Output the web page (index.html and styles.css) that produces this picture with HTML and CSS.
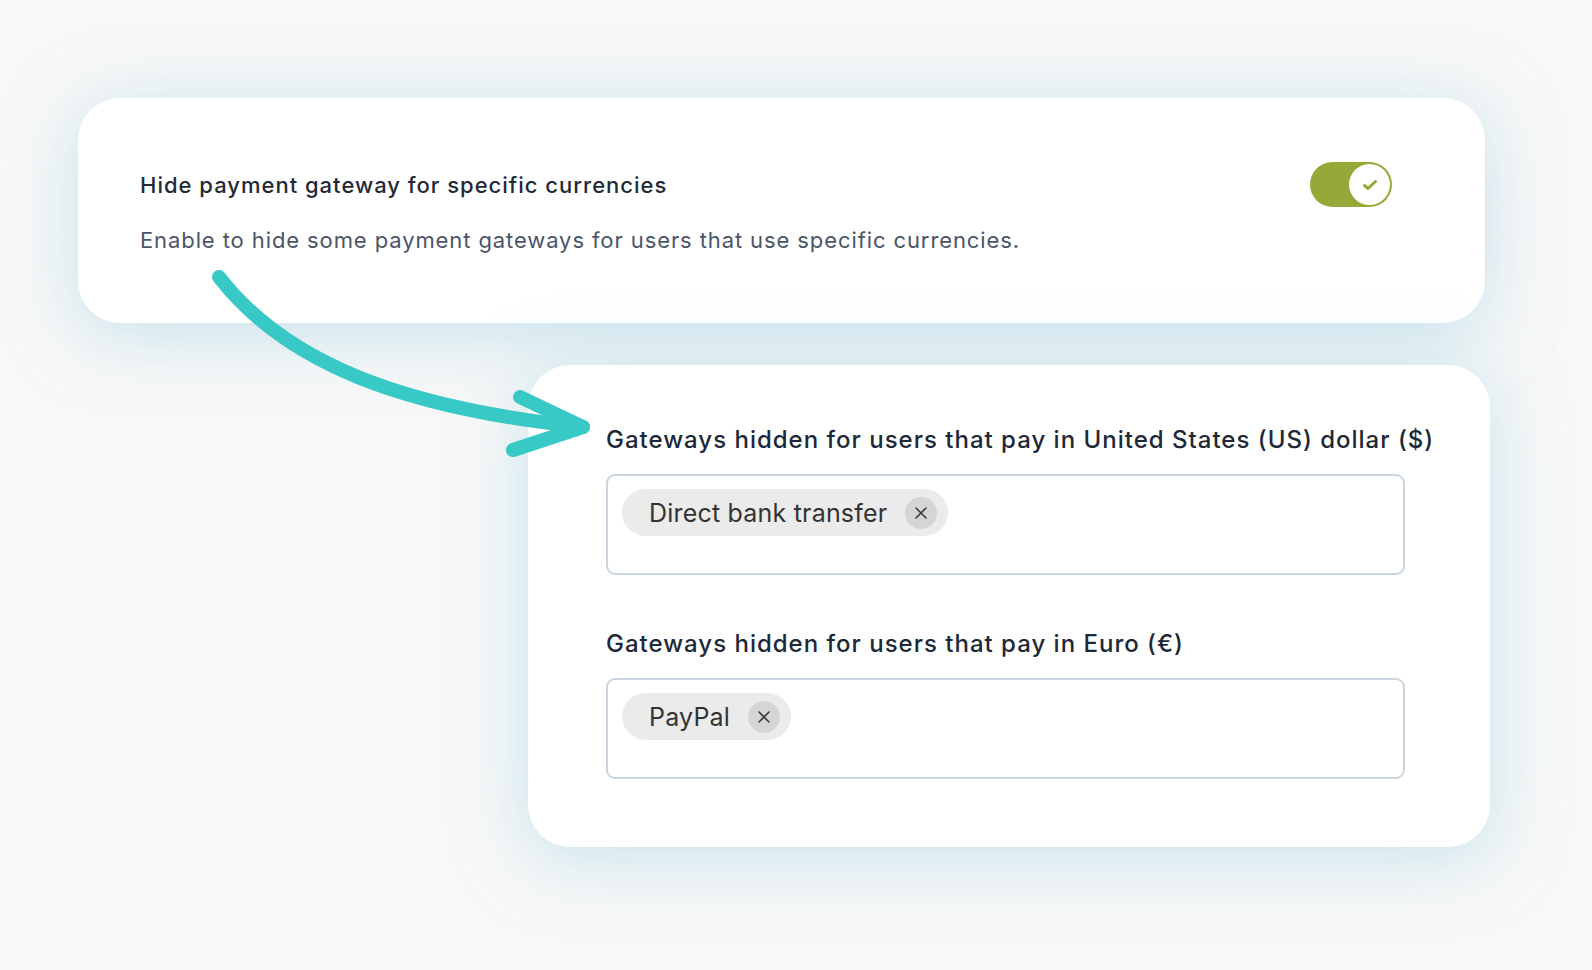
FILE: index.html
```html
<!DOCTYPE html>
<html lang="en">
<head>
<meta charset="UTF-8">
<meta name="viewport" content="width=device-width, initial-scale=1.0">
<title>Currency gateways</title>
<link rel="stylesheet" href="styles.css">
</head>
<body>
<div class="page">
    <div class="card setting-card">
        <div class="setting-text">
            <h3 class="setting-title">Hide payment gateway for specific currencies</h3>
            <p class="setting-desc">Enable to hide some payment gateways for users that use specific currencies.</p>
        </div>
        <div class="toggle">
            <span class="toggle-knob">
                <svg width="18" height="14" viewBox="0 0 18 14"><path d="M3.5 7.5 L7 10.5 L14.5 3.5" fill="none" stroke="#95a838" stroke-width="3" stroke-linecap="round" stroke-linejoin="round"/></svg>
            </span>
        </div>
    </div>

    <div class="card fields-card">
        <div class="field">
            <label class="field-label">Gateways hidden for users that pay in United States (US) dollar ($)</label>
            <div class="select-box">
                <span class="chip">Direct bank transfer
                    <span class="chip-close"><svg width="14" height="14" viewBox="0 0 14 14"><path d="M2 2 L12 12 M12 2 L2 12" stroke="#3a3a3a" stroke-width="1.6" stroke-linecap="round"/></svg></span>
                </span>
            </div>
        </div>
        <div class="field">
            <label class="field-label">Gateways hidden for users that pay in Euro (&euro;)</label>
            <div class="select-box">
                <span class="chip">PayPal
                    <span class="chip-close"><svg width="14" height="14" viewBox="0 0 14 14"><path d="M2 2 L12 12 M12 2 L2 12" stroke="#3a3a3a" stroke-width="1.6" stroke-linecap="round"/></svg></span>
                </span>
            </div>
        </div>
    </div>
</div>

<!-- hand drawn arrow over both cards -->
<svg class="arrow" width="1592" height="970" viewBox="0 0 1592 970">
    <path d="M219 277 C285 362, 400 408, 583 427" fill="none" stroke="#38c8c5" stroke-width="14" stroke-linecap="round"/>
    <path d="M520 397 L583 427 L513 450" fill="none" stroke="#38c8c5" stroke-width="14" stroke-linecap="round" stroke-linejoin="round"/>
</svg>
</body>
</html>
```

FILE: styles.css
```css
/* Basic styling */
body {
    font-family: Inter, "Noto Sans", sans-serif;
    margin: 0;
    padding: 0;
    background-color: #f8f8f8;
    position: relative;
    height: 970px;
    overflow: hidden;
}
.page {
    display: flex;
    flex-direction: column;
    align-items: flex-start;
    gap: 42px;
    padding-top: 98px;
}
.card {
    background-color: #fff;
    border-radius: 42px;
    box-shadow: 0 10px 70px rgba(145, 205, 225, 0.5);
    box-sizing: border-box;
}
.setting-card {
    margin-left: 78px;
    width: 1407px;
    height: 225px;
    padding: 72px 93px 0 62px;
    display: flex;
    align-items: flex-start;
    justify-content: space-between;
}
.setting-title {
    margin: 0 0 25px;
    font-size: 22px;
    font-weight: 500;
    letter-spacing: 1px;
    color: #1f2937;
    line-height: 30px;
}
.setting-desc {
    margin: 0;
    font-size: 22px;
    letter-spacing: 0.9px;
    color: #4b5568;
    line-height: 30px;
}
.toggle {
    width: 82px;
    height: 45px;
    border-radius: 23px;
    background-color: #96a838;
    display: flex;
    justify-content: flex-end;
    align-items: center;
    padding: 2px;
    box-sizing: border-box;
    margin-top: -8px;
}
.toggle-knob {
    width: 41px;
    height: 41px;
    border-radius: 50%;
    background-color: #fff;
    display: flex;
    align-items: center;
    justify-content: center;
}
.fields-card {
    margin-left: 528px;
    width: 962px;
    height: 482px;
    padding: 59px 85px 0 78px;
    display: flex;
    flex-direction: column;
    gap: 53px;
}
.field-label {
    display: block;
    font-size: 24px;
    font-weight: 500;
    letter-spacing: 1px;
    color: #1d2838;
    line-height: 32px;
    white-space: nowrap;
    margin-bottom: 18px;
}
.select-box {
    width: 799px;
    height: 101px;
    border: 2px solid #cbd5e1;
    border-radius: 9px;
    box-sizing: border-box;
    padding: 13px 14px;
}
.chip {
    display: inline-flex;
    align-items: center;
    height: 47px;
    padding: 0 11px 0 27px;
    gap: 18px;
    border-radius: 24px;
    background-color: #ebebeb;
    font-size: 25px;
    letter-spacing: 0.2px;
    color: #333;
}
.chip-close {
    width: 32px;
    height: 32px;
    border-radius: 50%;
    background-color: #d5d5d5;
    display: flex;
    align-items: center;
    justify-content: center;
}
.arrow {
    position: absolute;
    left: 0;
    top: 0;
    pointer-events: none;
}
```
